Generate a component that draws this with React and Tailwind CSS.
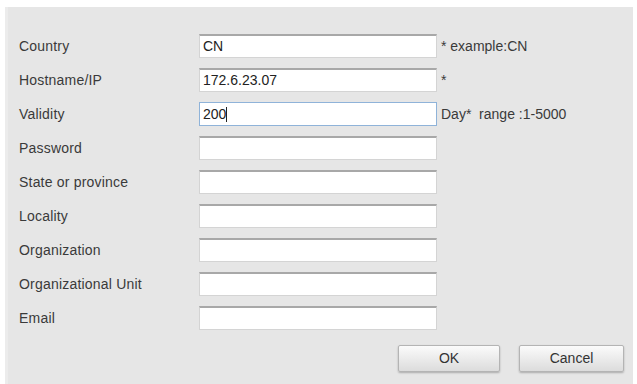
import React from 'react';

const rows = [
  { label: 'Country', value: 'CN', hint: '* example:CN' },
  { label: 'Hostname/IP', value: '172.6.23.07', hint: '*' },
  { label: 'Validity', value: '200', hint: 'Day*  range :1-5000', focused: true },
  { label: 'Password', value: '' },
  { label: 'State or province', value: '' },
  { label: 'Locality', value: '' },
  { label: 'Organization', value: '' },
  { label: 'Organizational Unit', value: '' },
  { label: 'Email', value: '' },
];

const Field = ({ value, focused }) => (
  <div
    className={`w-[238px] h-[24px] bg-white flex items-center px-[3px] text-[14px] text-[#222] ${
      focused
        ? 'border border-[#8fb3d9]'
        : 'border border-[#d4d4d4] border-t-[#a8a8a8] border-t-2'
    }`}
  >
    <span>{value}</span>
    {focused && <span className="w-px h-[15px] bg-[#222]" />}
  </div>
);

const Button = ({ children, w }) => (
  <button
    className={`${w} h-[27px] rounded-[2px] border border-[#b4b4b4] bg-gradient-to-b from-[#fbfbfb] to-[#dcdcdc] shadow-[0_1px_2px_rgba(0,0,0,0.25)] text-[14px] text-[#333]`}
  >
    {children}
  </button>
);

const App = () => {
  return (
    <div className="w-[637px] h-[384px] bg-white overflow-hidden font-['Liberation_Sans',Arial,sans-serif]">
      <div className="ml-[5px] mt-[7px] w-[628px] h-[377px] bg-[#e6e6e6] border-l-[3px] border-l-[#ececec] pt-[27px] pl-[11px]">
        <div className="flex flex-col gap-[10px]">
          {rows.map((r) => (
            <div key={r.label} className="flex items-center h-[24px]">
              <div className="w-[180px] text-[14px] tracking-[0.2px] text-[#3a3a3a]">{r.label}</div>
              <Field value={r.value} focused={r.focused} />
              {r.hint && (
                <div className="ml-[4px] text-[14px] text-[#3a3a3a] whitespace-pre">{r.hint}</div>
              )}
            </div>
          ))}
        </div>
        <div className="flex justify-end gap-[19px] mt-[15px] pr-[9px]">
          <Button w="w-[102px]">OK</Button>
          <Button w="w-[105px]">Cancel</Button>
        </div>
      </div>
    </div>
  );
};

export default App;
